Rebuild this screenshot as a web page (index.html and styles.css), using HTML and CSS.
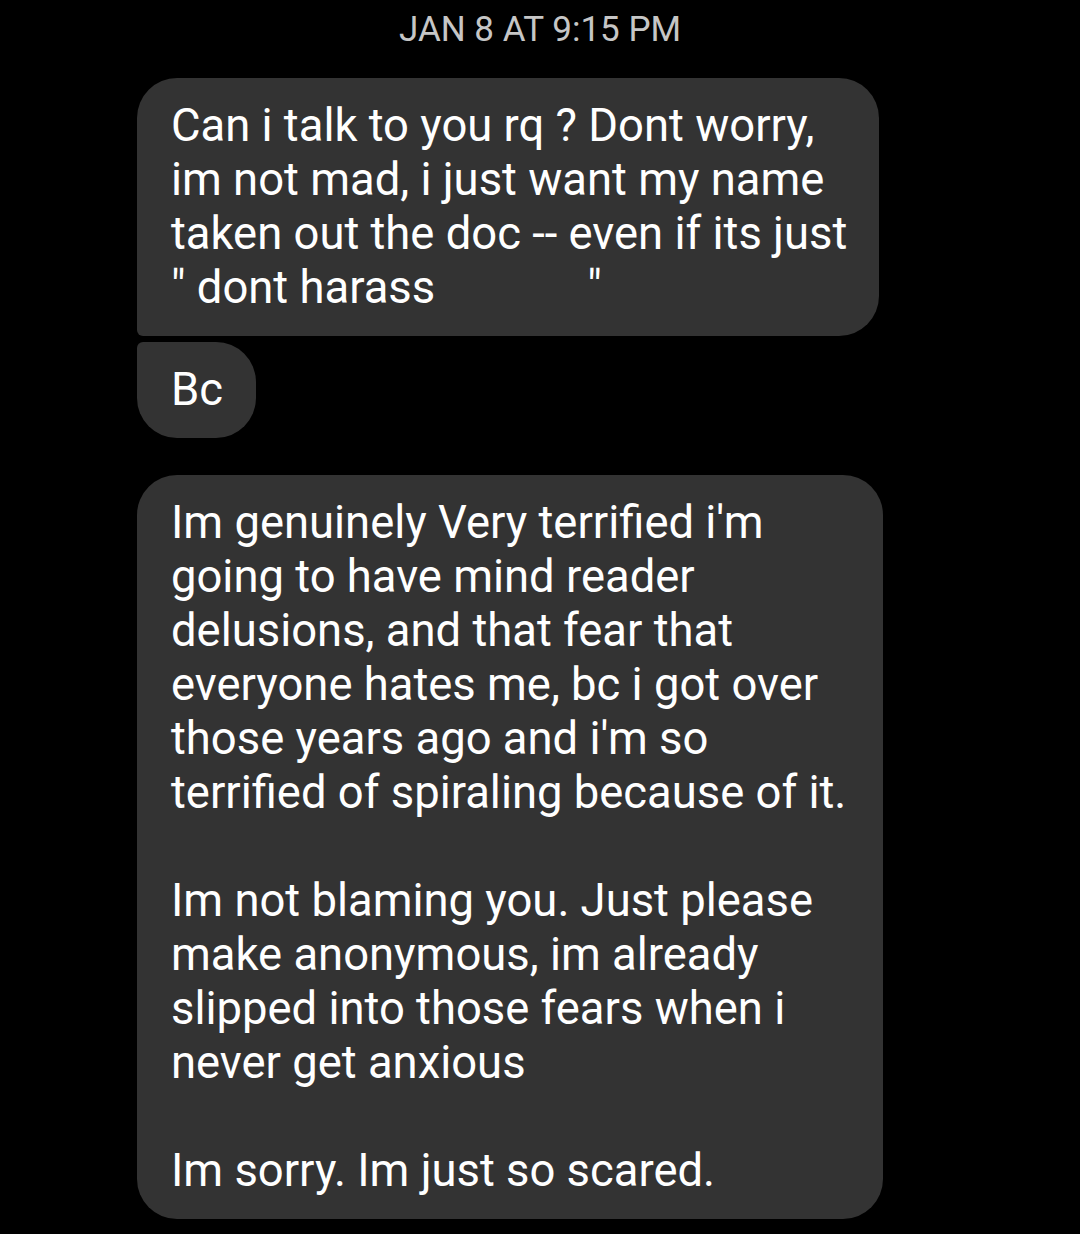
FILE: index.html
```html
<!DOCTYPE html>
<html lang="en">
<head>
  <meta charset="UTF-8" />
  <title>Messages</title>
  <link rel="stylesheet" href="styles.css">
</head>
<body>
  <div class="thread">
    <div class="stamp">JAN 8 AT 9:15 PM</div>

    <div class="bubble first">
      Can i talk to you rq ? Dont worry,<br>
      im not mad, i just want my name<br>
      taken out the doc -- even if its just<br>
      " dont harass<span class="redacted"></span>"
    </div>

    <div class="bubble last">Bc</div>

    <div class="bubble single">
      Im genuinely Very terrified i'm<br>
      going to have mind reader<br>
      delusions, and that fear that<br>
      everyone hates me, bc i got over<br>
      those years ago and i'm so<br>
      terrified of spiraling because of it.<br>
      <br>
      Im not blaming you. Just please<br>
      make anonymous, im already<br>
      slipped into those fears when i<br>
      never get anxious<br>
      <br>
      Im sorry. Im just so scared.
    </div>
  </div>
</body>
</html>
```

FILE: styles.css
```css
body {
  margin: 0;
  background: #000;
  font-family: Roboto, "Noto Sans", sans-serif;
  color: #fff;
}
.thread {
  display: flex;
  flex-direction: column;
  align-items: flex-start;
  padding: 10px 0 0 137px;
}
.stamp {
  align-self: stretch;
  margin-left: -137px;
  text-align: center;
  color: #c6c6c6;
  font-size: 35px;
  line-height: 40px;
  margin-bottom: 28px;
}
.bubble {
  background: #333333;
  font-size: 45.4px;
  line-height: 54px;
  padding: 21px 33px 21px 34px;
  border-radius: 40px;
  white-space: nowrap;
}
.bubble.first {
  border-bottom-left-radius: 6px;
  margin-bottom: 6px;
  padding-right: 32px;
}
.bubble.last {
  border-top-left-radius: 6px;
  margin-bottom: 37px;
}
.bubble.single {
  padding-right: 37px;
}
.redacted {
  display: inline-block;
  width: 152px;
}
```
